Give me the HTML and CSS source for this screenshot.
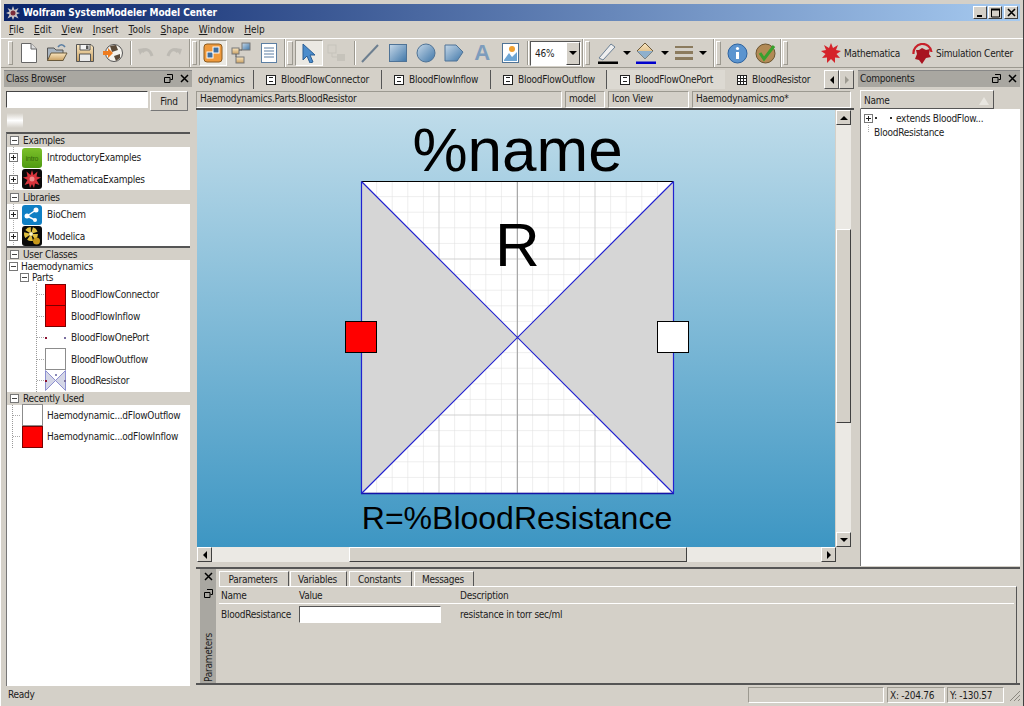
FILE: index.html
```html
<!DOCTYPE html>
<html lang="en">

<head>
  <meta charset="UTF-8">
  <title>Wolfram SystemModeler Model Center</title>
  <link rel="stylesheet" href="styles.css">
</head>

<body>
  <svg class="defs" width="0" height="0">
    <defs>
      <linearGradient id="blueShape" x1="0" y1="0" x2="1" y2="1">
        <stop offset="0" stop-color="#c6d8e8" />
        <stop offset="1" stop-color="#3f76a8" />
      </linearGradient>
      <linearGradient id="tan" x1="0" y1="0" x2="0" y2="1">
        <stop offset="0" stop-color="#fbe7c0" />
        <stop offset="1" stop-color="#c9a062" />
      </linearGradient>
      <linearGradient id="canvasBg" x1="0" y1="0" x2="0" y2="1">
        <stop offset="0" stop-color="#bfdcea" />
        <stop offset="1" stop-color="#3d96c3" />
      </linearGradient>
      <linearGradient id="introGreen" x1="0" y1="0" x2="0" y2="1">
        <stop offset="0" stop-color="#7cc02a" />
        <stop offset="1" stop-color="#4f9a12" />
      </linearGradient>
      <pattern id="gridMinor" x="361.5" y="181.5" width="15.6" height="15.6" patternUnits="userSpaceOnUse">
        <path d="M15.6 0V15.6H0" fill="none" stroke="#dedede" />
      </pattern>
      <pattern id="gridMajor" x="361.5" y="181.5" width="78" height="78" patternUnits="userSpaceOnUse">
        <path d="M78 0V78H0" fill="none" stroke="#bcbcbc" />
      </pattern>
    </defs>
  </svg>

  <div class="window">
    <div class="titlebar">
      <svg class="title-icon" width="14" height="14" viewBox="0 0 14 14">
        <polygon points="7,0 8.5,4 12.5,2 10.5,6 14,7 10.5,8.5 12.5,12.5 8.5,10.5 7,14 5.5,10.5 1.5,12.5 3.5,8.5 0,7 3.5,5.5 1.5,2 5.5,4" fill="#c9c3c3" />
        <circle cx="7" cy="7" r="2.5" fill="#7c2d3a" />
      </svg>
      <span class="title-text">Wolfram SystemModeler Model Center</span>
      <div class="win-buttons">
        <span class="win-btn"><svg width="9" height="9" viewBox="0 0 9 9"><path d="M1 8H6" stroke="#000" stroke-width="2" /></svg></span>
        <span class="win-btn"><svg width="11" height="10" viewBox="0 0 11 10"><path d="M1.5 1.5H9.5V9H1.5Z" fill="none" stroke="#000" /><path d="M1 1.5H10" stroke="#000" stroke-width="2" /></svg></span>
        <span class="win-btn close-btn"><svg width="9" height="9" viewBox="0 0 9 9"><path d="M1 1L8 8M8 1L1 8" stroke="#000" stroke-width="1.6" /></svg></span>
      </div>
    </div>

    <div class="menubar">
      <span><u>F</u>ile</span>
      <span><u>E</u>dit</span>
      <span><u>V</u>iew</span>
      <span><u>I</u>nsert</span>
      <span><u>T</u>ools</span>
      <span><u>S</u>hape</span>
      <span><u>W</u>indow</span>
      <span><u>H</u>elp</span>
    </div>

    <div class="toolbar">
      <div class="grip"></div>
      <div class="tool-group">
        <span class="tool"><svg width="20" height="22" viewBox="0 0 20 22"><path d="M2.5 1.5H12L17.5 7V20.5H2.5Z" fill="#fff" stroke="#666" /><path d="M12 1.5V7H17.5" fill="#ddd" stroke="#666" /></svg></span>
        <span class="tool"><svg width="22" height="20" viewBox="0 0 22 20"><path d="M1.5 5H8L10 7H17V17.5H1.5Z" fill="#a8b4c0" stroke="#555" /><path d="M1.5 17.5L5 10H21L17 17.5Z" fill="url(#tan)" stroke="#6a5a3c" /><path d="M12 4C14 1 17 1 19 4" fill="none" stroke="#5a7ea3" stroke-width="1.6" /></svg></span>
        <span class="tool"><svg width="20" height="20" viewBox="0 0 20 20"><path d="M1.5 1.5H16L18.5 4V18.5H1.5Z" fill="url(#tan)" stroke="#555" /><path d="M5 1.5H15V7H5Z" fill="#f4f4f4" stroke="#555" /><path d="M11 2.5H13.5V6H11Z" fill="#555" /><path d="M4.5 11H15.5V18.5H4.5Z" fill="#e8e8e8" stroke="#555" /></svg></span>
        <span class="tool"><svg width="22" height="20" viewBox="0 0 22 20"><circle cx="12" cy="10" r="8.5" fill="#f4f2ec" stroke="#555" /><path d="M8 3L14 2L16 7L10 9ZM12 13L18 11L18 15L14 18Z" fill="#5b4a38" /><path d="M1 8H6V5L11 10L6 15V12H1Z" fill="#ef7c1f" /></svg></span>
        <span class="divider"></span>
        <span class="tool"><svg width="18" height="14" viewBox="0 0 18 14"><path d="M5 6C8 2 13 3 15 10" fill="none" stroke="#bdbab3" stroke-width="3" /><path d="M1 3L8 2L3 9Z" fill="#bdbab3" /></svg></span>
        <span class="tool"><svg width="18" height="14" viewBox="0 0 18 14"><path d="M13 6C10 2 5 3 3 10" fill="none" stroke="#bdbab3" stroke-width="3" /><path d="M17 3L10 2L15 9Z" fill="#bdbab3" /></svg></span>
      </div>
      <div class="toolbar-break"></div>
      <div class="grip"></div>
      <div class="tool-group">
        <span class="tool tool-on"><svg width="20" height="20" viewBox="0 0 20 20"><rect x="1" y="1" width="18" height="18" rx="3" fill="#ef9a3c" stroke="#8a5a20" /><rect x="4" y="9" width="6" height="6" fill="#3f6e9e" stroke="#fff" /><rect x="10" y="4" width="6" height="6" fill="#3f6e9e" stroke="#fff" /></svg></span>
        <span class="tool"><svg width="20" height="22" viewBox="0 0 20 22"><rect x="1" y="6" width="7" height="6" fill="url(#tan)" stroke="#777" /><rect x="11" y="1" width="8" height="7" fill="url(#blueShape)" stroke="#777" /><rect x="5" y="15" width="8" height="6" fill="url(#tan)" stroke="#777" /><path d="M8 8H11M5 12V15" stroke="#555" /></svg></span>
        <span class="tool"><svg width="18" height="22" viewBox="0 0 18 22"><rect x="1.5" y="1.5" width="15" height="19" fill="#fff" stroke="#5c7fa3" /><path d="M4 6H14M4 9H14M4 12H14M4 15H14" stroke="#5c7fa3" /></svg></span>
      </div>
      <div class="toolbar-break"></div>
      <div class="grip wide-grip"></div>
      <div class="tool-group">
        <span class="tool tool-on"><svg width="16" height="20" viewBox="0 0 16 20"><path d="M2 1L14 12H9L12 19L9 20L6 13L2 17Z" fill="#4a8ccc" stroke="#2b5f94" /></svg></span>
        <span class="tool"><svg width="20" height="20" viewBox="0 0 20 20"><rect x="1" y="2" width="8" height="8" fill="none" stroke="#c6c3bb" /><rect x="10" y="11" width="8" height="7" fill="#c6c3bb" /><path d="M5 10V14H10" fill="none" stroke="#c6c3bb" /></svg></span>
        <span class="divider"></span>
        <span class="tool"><svg width="20" height="20" viewBox="0 0 20 20"><path d="M2 19L18 2" stroke="#6d7f90" stroke-width="2" /></svg></span>
        <span class="tool"><svg width="18" height="18" viewBox="0 0 18 18"><rect x=".5" y=".5" width="17" height="17" fill="url(#blueShape)" stroke="#4f7396" /></svg></span>
        <span class="tool"><svg width="20" height="20" viewBox="0 0 20 20"><circle cx="10" cy="10" r="9" fill="url(#blueShape)" stroke="#4f7396" /></svg></span>
        <span class="tool"><svg width="20" height="18" viewBox="0 0 20 18"><path d="M1 1H12L19 8L13 17H1Z" fill="url(#blueShape)" stroke="#4f7396" /></svg></span>
        <span class="tool tool-letter">A</span>
        <span class="tool"><svg width="17" height="20" viewBox="0 0 17 20"><rect x=".5" y=".5" width="16" height="19" fill="#fff" stroke="#4f7396" /><path d="M2 17L7 10L10 14L15 9V18H2Z" fill="#6da5d4" /><circle cx="10" cy="6" r="3" fill="#f0a030" /></svg></span>
      </div>
      <div class="divider"></div>
      <div class="zoom-combo">
        <span class="zoom-value">46%</span>
        <span class="combo-btn"><span class="arrow-down"></span></span>
      </div>
      <div class="toolbar-break"></div>
      <div class="grip"></div>
      <div class="tool-group color-tools">
        <span class="color-tool"><svg width="22" height="22" viewBox="0 0 22 22"><path d="M2 16L14 2L18 5L6 18Z" fill="#eee" stroke="#6a7f94" /><path d="M1 21H21" stroke="#000" stroke-width="3" /></svg></span>
        <span class="arrow-down"></span>
        <span class="color-tool"><svg width="22" height="22" viewBox="0 0 22 22"><path d="M10 1L18 9L10 17L2 9Z" fill="url(#tan)" stroke="#6d5a3a" /><path d="M2 9H18L10 17Z" fill="#8fb0cc" /><path d="M1 21H21" stroke="#0000cc" stroke-width="3" /></svg></span>
        <span class="arrow-down"></span>
        <span class="color-tool"><svg width="20" height="16" viewBox="0 0 20 16"><path d="M1 2H19" stroke="#8b7b5e" stroke-width="2" /><path d="M1 7.5H19" stroke="#8b7b5e" stroke-width="3" /><path d="M1 13.500H19" stroke="#8b7b5e" stroke-width="3" /></svg></span>
        <span class="arrow-down"></span>
      </div>
      <div class="toolbar-break"></div>
      <div class="grip"></div>
      <div class="tool-group">
        <span class="tool"><svg width="21" height="21" viewBox="0 0 21 21"><circle cx="10.500" cy="10.500" r="9.500" fill="#5b94cf" stroke="#2b62a0" /><circle cx="10.500" cy="5.500" r="1.600" fill="#fff" /><path d="M10.500 9V16" stroke="#fff" stroke-width="3" /></svg></span>
        <span class="tool"><svg width="21" height="21" viewBox="0 0 21 21"><circle cx="10.500" cy="10.500" r="9.500" fill="#b28a55" stroke="#6c5530" /><path d="M5 10L9 16L19 3" fill="none" stroke="#38a02e" stroke-width="3" /></svg></span>
      </div>
      <div class="toolbar-break"></div>
      <div class="grip"></div>
      <div class="launchers">
        <span class="launcher"><svg width="20" height="20" viewBox="0 0 20 20"><polygon points="10,0 12,5 17,2 15,7 20,8 15.500,11 19,15 14,14.500 14,20 10,16 6,20 6,14.500 1,15 4.500,11 0,8 5,7 3,2 8,5" fill="#d5232a" /></svg>Mathematica</span>
        <span class="launcher"><svg width="21" height="21" viewBox="0 0 21 21"><path d="M1.500 11A9 9 0 0 1 19.500 9" fill="none" stroke="#c8202a" stroke-width="2.200" /><polygon points="10,5 14,7 18,6 17,11 19,14 14,15 10,21 7,17 3,16 5,11 4,7 7,7" fill="#a81420" /></svg>Simulation Center</span>
      </div>
    </div>

    <div class="main">
      <aside class="class-browser">
        <div class="dock-title">
          <span>Class Browser</span>
          <span class="dock-icons">
            <svg width="9" height="9" viewBox="0 0 9 9"><path d="M3 .5H8.500V5.500H6.500M.5 3.500H6V8.500H.5Z" fill="none" stroke="#000" /></svg>
            <svg width="9" height="9" viewBox="0 0 9 9"><path d="M1 1L8 8M8 1L1 8" stroke="#000" stroke-width="1.500" /></svg>
          </span>
        </div>
        <div class="search-row">
          <input class="search-input" type="text">
          <button class="find-btn">Find</button>
        </div>
        <div class="mini-row"><span class="mini-btn"></span></div>

        <div class="tree">
          <div class="tree-head"><span class="box minus"></span>Examples</div>
          <div class="lib-row">
            <span class="box plus"></span>
            <svg class="lib-icon" width="20" height="20" viewBox="0 0 20 20"><rect width="20" height="20" rx="3" fill="url(#introGreen)" /><text x="10" y="13" font-size="7" text-anchor="middle" fill="#35680a" font-family="Liberation Sans">intro</text></svg>
            IntroductoryExamples
          </div>
          <div class="lib-row">
            <span class="box plus"></span>
            <svg class="lib-icon" width="20" height="20" viewBox="0 0 20 20"><rect width="20" height="20" rx="3" fill="#0a0a0a" /><polygon points="10,1 11.500,6 15.500,2.500 14.500,7.500 19,8.500 14.500,11 17.500,16 13,14.500 12,19 10,15 8,19 7,14.500 2.500,16 5.500,11 1,8.500 5.500,7.500 4.500,2.500 8.500,6" fill="#d8343c" /><circle cx="10" cy="10" r="2.500" fill="#f08a8a" /></svg>
            MathematicaExamples
          </div>
          <div class="tree-head libs-head"><span class="box minus"></span>Libraries</div>
          <div class="lib-row">
            <span class="box plus"></span>
            <svg class="lib-icon" width="20" height="20" viewBox="0 0 20 20"><rect width="20" height="20" rx="3" fill="#0f7fc4" /><path d="M5 11L14 5M5 11L13 15" stroke="#fff" stroke-width="1.500" /><circle cx="5" cy="11" r="2.500" fill="#fff" /><circle cx="14" cy="5" r="2.500" fill="#fff" /><circle cx="13" cy="15" r="2" fill="#fff" /></svg>
            BioChem
          </div>
          <div class="lib-row">
            <span class="box plus"></span>
            <svg class="lib-icon" width="20" height="20" viewBox="0 0 20 20"><rect width="20" height="20" rx="3" fill="#0a0a0a" /><circle cx="9" cy="8" r="4.500" fill="none" stroke="#e0c040" stroke-width="5" stroke-dasharray="4 1.500" /><circle cx="9" cy="8" r="2" fill="#fff6c0" /><circle cx="14.500" cy="15" r="3.500" fill="#c7981a" /></svg>
            Modelica
          </div>
          <div class="tree-rule"></div>
          <div class="tree-head user-head"><span class="box minus"></span>User Classes</div>
          <div class="plain-row"><span class="box minus"></span>Haemodynamics</div>
          <div class="plain-row parts-row"><span class="box minus"></span>Parts</div>
          <div class="branch">
            <div class="class-row">
              <span class="class-icon red-icon"></span>BloodFlowConnector
            </div>
            <div class="class-row">
              <span class="class-icon red-icon"></span>BloodFlowInflow
            </div>
            <div class="class-row">
              <svg class="class-icon-svg" width="21" height="21" viewBox="0 0 21 21"><rect x="0" y="10" width="2" height="2" fill="#8a1030" /><rect x="19" y="10" width="2" height="2" fill="#7a6fa0" /></svg>BloodFlowOnePort
            </div>
            <div class="class-row">
              <span class="class-icon white-icon"></span>BloodFlowOutflow
            </div>
            <div class="class-row">
              <svg class="class-icon-svg" width="21" height="21" viewBox="0 0 21 21"><path d="M.5 .5L20.500 20.500V.5L.5 20.500Z" fill="#d4d6e6" stroke="#8d8fd0" /><rect x="0" y="10" width="2" height="2" fill="#8a1030" /><rect x="19" y="10" width="2" height="2" fill="#7a6fa0" /><rect x="10" y="4" width="2" height="2" fill="#8a8ab8" /></svg>BloodResistor
            </div>
          </div>
          <div class="tree-head"><span class="box minus"></span>Recently Used</div>
          <div class="recent">
            <div class="recent-row"><span class="class-icon white-icon"></span>Haemodynamic...dFlowOutflow</div>
            <div class="recent-row"><span class="class-icon red-icon"></span>Haemodynamic...odFlowInflow</div>
          </div>
        </div>
      </aside>

      <div class="workspace">
        <div class="top-row">
          <section class="editor">
            <div class="tabs">
              <span class="doc-tab cut-tab">odynamics</span>
              <span class="doc-tab tab-connector"><span class="tab-glyph"></span>BloodFlowConnector</span>
              <span class="doc-tab tab-inflow"><span class="tab-glyph"></span>BloodFlowInflow</span>
              <span class="doc-tab tab-outflow"><span class="tab-glyph"></span>BloodFlowOutflow</span>
              <span class="doc-tab tab-oneport"><span class="tab-glyph"></span>BloodFlowOnePort</span>
              <span class="doc-tab tab-active"><span class="tab-glyph grid-glyph"></span>BloodResistor</span>
              <span class="tab-scroll">
                <span class="tab-arrow"><span class="arrow-left"></span></span>
                <span class="tab-arrow"><span class="arrow-right-off"></span></span>
              </span>
            </div>
            <div class="infobar">
              <span class="field field-path">Haemodynamics.Parts.BloodResistor</span>
              <span class="field field-kind">model</span>
              <span class="field field-view">Icon View</span>
              <span class="field field-file">Haemodynamics.mo*</span>
            </div>
            <div class="canvas-area">
              <svg class="canvas" width="638" height="437" viewBox="197 110 638 437">
                <rect x="197" y="110" width="638" height="437" fill="url(#canvasBg)" />
                <rect x="361.500" y="181.500" width="312" height="312" fill="#fff" />
                <rect x="361.500" y="181.500" width="312" height="312" fill="url(#gridMinor)" />
                <rect x="361.500" y="181.500" width="312" height="312" fill="url(#gridMajor)" />
                <path d="M517.500 181.500V493.500M361.500 337.500H673.500" stroke="#a8a8a8" />
                <path d="M361.500 181.500L517.500 337.500L361.500 493.500Z M673.500 181.500L517.500 337.500L673.500 493.500Z" fill="#d6d6d6" />
                <path d="M361.500 181.500H673.500" stroke="#000" />
                <path d="M361 493.500H674" stroke="#1414a8" stroke-width="1.600" />
                <path d="M361.500 181.500L673.500 493.500M673.500 181.500L361.500 493.500M361.500 181.500V493.500M673.500 181.500V493.500" class="canvas-blue" />
                <text x="517.500" y="171" class="canvas-name">%name</text>
                <text x="517.500" y="266" class="canvas-r">R</text>
                <text x="517" y="529" class="canvas-expr">R=%BloodResistance</text>
                <rect x="345.500" y="321.500" width="31" height="31" fill="#ff0000" stroke="#000" />
                <rect x="657.500" y="321.500" width="31" height="31" fill="#fff" stroke="#000" />
              </svg>
              <div class="vscroll">
                <span class="sb-btn"><span class="arrow-up"></span></span>
                <span class="sb-track v-track-a"></span>
                <span class="sb-thumb v-thumb"></span>
                <span class="sb-track v-track-b"></span>
                <span class="sb-btn"><span class="arrow-down"></span></span>
              </div>
              <div class="hscroll">
                <span class="sb-btn"><span class="arrow-left"></span></span>
                <span class="sb-track h-track-a"></span>
                <span class="sb-thumb h-thumb"></span>
                <span class="sb-track h-track-b"></span>
                <span class="sb-btn"><span class="arrow-right"></span></span>
              </div>
            </div>
          </section>

          <aside class="components">
            <div class="dock-title">
              <span>Components</span>
              <span class="dock-icons">
                <svg width="9" height="9" viewBox="0 0 9 9"><path d="M3 .5H8.500V5.500H6.500M.5 3.500H6V8.500H.5Z" fill="none" stroke="#000" /></svg>
                <svg width="9" height="9" viewBox="0 0 9 9"><path d="M1 1L8 8M8 1L1 8" stroke="#000" stroke-width="1.500" /></svg>
              </span>
            </div>
            <div class="comp-head">
              <span class="comp-name">Name<span class="sort-mark"></span></span>
            </div>
            <div class="comp-list">
              <div class="comp-row"><span class="box plus"></span><span class="dots"></span>extends BloodFlow...</div>
              <div class="comp-row comp-leaf">BloodResistance</div>
            </div>
          </aside>
        </div>

        <section class="params">
          <div class="param-strip">
            <svg width="9" height="9" viewBox="0 0 9 9"><path d="M1 1L8 8M8 1L1 8" stroke="#000" stroke-width="1.500" /></svg>
            <svg width="9" height="9" viewBox="0 0 9 9"><path d="M3 .5H8.500V5.500H6.500M.5 3.500H6V8.500H.5Z" fill="none" stroke="#000" /></svg>
            <span class="strip-label">Parameters</span>
          </div>
          <div class="param-main">
            <div class="param-tabs">
              <span class="param-tab param-tab-on">Parameters</span>
              <span class="param-tab tab-vars">Variables</span>
              <span class="param-tab tab-const">Constants</span>
              <span class="param-tab tab-msgs">Messages</span>
            </div>
            <div class="param-body">
              <div class="param-grid param-head">
                <span>Name</span><span>Value</span><span>Description</span>
              </div>
              <div class="param-grid param-row">
                <span>BloodResistance</span>
                <input class="param-input" type="text">
                <span>resistance in torr sec/ml</span>
              </div>
            </div>
          </div>
        </section>
      </div>
    </div>

    <div class="statusbar">
      <span class="status-ready">Ready</span>
      <span class="status-cell status-blank"></span>
      <span class="status-cell status-x">X: -204.76</span>
      <span class="status-cell status-y">Y: -130.57</span>
      <svg class="status-grip" width="14" height="14" viewBox="0 0 14 14"><path d="M13 3L3 13M13 7L7 13M13 11L11 13" stroke="#8a877f" /></svg>
    </div>
  </div>
</body>

</html>
```

FILE: styles.css
```css
* {
  box-sizing: border-box;
  margin: 0;
  padding: 0;
}

body {
  font-family: 'DejaVu Sans Condensed', 'Liberation Sans', Arial, sans-serif;
  font-size: 10px;
  letter-spacing: -0.25px;
  color: #1c1c1c;
  background: #d4d0c8;
  overflow: hidden;
  white-space: nowrap;
}

.defs {
  display: block;
  height: 0;
}

.window {
  width: 1024px;
  height: 706px;
  padding-top: 4px;
  display: flex;
  flex-direction: column;
  background: #d4d0c8;
  border-right: 1px solid #404040;
  border-left: 1px solid #fff;
}

/* title bar */
.titlebar {
  height: 17px;
  margin: 0 3px;
  padding: 0 2px;
  display: flex;
  align-items: center;
  gap: 3px;
  background: linear-gradient(to right, #0a246a, #a6caf0);
}

.title-text {
  color: #fff;
  font-weight: bold;
  font-size: 10px;
  letter-spacing: -0.05px;
}

.win-buttons {
  margin-left: auto;
  display: flex;
  gap: 1px;
}

.win-btn {
  width: 14px;
  height: 13px;
  display: flex;
  align-items: center;
  justify-content: center;
  background: #d4d0c8;
  border: 1px solid;
  border-color: #fff #404040 #404040 #fff;
}

.close-btn {
  margin-left: 1px;
}

/* menu */
.menubar {
  height: 17px;
  padding-left: 8px;
  display: flex;
  align-items: center;
  gap: 10px;
  letter-spacing: 0;
}

/* toolbar */
.toolbar {
  height: 30px;
  display: flex;
  align-items: center;
  padding-left: 7px;
  border-top: 1px solid #fff;
  border-bottom: 1px solid #9c9990;
}

.grip {
  width: 5px;
  height: 24px;
  margin-right: 2px;
  flex: none;
  border: 1px solid;
  border-color: #fff #9c9990 #9c9990 #fff;
}

.wide-grip {
  width: 6px;
}

.toolbar-break {
  width: 2px;
  height: 28px;
  margin: 0 1px;
  flex: none;
  border-left: 1px solid #9c9990;
  border-right: 1px solid #fff;
}

.tool-group {
  display: flex;
  align-items: center;
}

.tool {
  width: 28px;
  height: 26px;
  flex: none;
  display: flex;
  align-items: center;
  justify-content: center;
}

.tool-on {
  background: #ebe9e3;
  border: 1px solid;
  border-color: #9c9990 #fff #fff #9c9990;
}

.tool-letter {
  font-family: 'Liberation Sans', Arial, sans-serif;
  font-size: 22px;
  font-weight: bold;
  color: #7d9cbc;
}

.divider {
  width: 2px;
  height: 24px;
  margin: 0 0 0 3px;
  flex: none;
  border-left: 1px solid #9c9990;
  border-right: 1px solid #fff;
}

.zoom-combo {
  width: 51px;
  height: 25px;
  margin-left: 1px;
  display: flex;
  align-items: stretch;
  background: #fff;
  border: 1px solid;
  border-color: #555 #fff #fff #555;
}

.zoom-value {
  flex: 1;
  padding-left: 4px;
  line-height: 23px;
}

.combo-btn {
  width: 14px;
  display: flex;
  align-items: center;
  justify-content: center;
  background: #d4d0c8;
  border: 1px solid;
  border-color: #fff #404040 #404040 #fff;
}

.color-tools {
  gap: 3px;
  margin: 0 5px 0 4px;
}

.color-tool {
  width: 24px;
  display: flex;
  justify-content: center;
}

.launchers {
  margin-left: 31px;
  display: flex;
  gap: 12px;
}

.launcher {
  display: flex;
  align-items: center;
  gap: 3px;
}

/* little triangles used by combo boxes and scrollbars */
.arrow-down,
.arrow-up,
.arrow-left,
.arrow-right,
.arrow-right-off {
  width: 0;
  height: 0;
  display: block;
  flex: none;
  border-style: solid;
  border-color: transparent;
}

.arrow-down {
  border-width: 4px 4px 0;
  border-top-color: #000;
}

.arrow-up {
  border-width: 0 4px 4px;
  border-bottom-color: #000;
}

.arrow-left {
  border-width: 4px 4px 4px 0;
  border-right-color: #000;
}

.arrow-right {
  border-width: 4px 0 4px 4px;
  border-left-color: #000;
}

.arrow-right-off {
  border-width: 4px 0 4px 4px;
  border-left-color: #9c9990;
}

/* main area */
.main {
  flex: 1;
  min-height: 0;
  padding: 1px 3px 0;
  display: grid;
  grid-template-columns: 188px 1fr;
  gap: 4px;
}

.dock-title {
  height: 17px;
  margin-top: 1px;
  padding: 0 3px 2px 2px;
  display: flex;
  align-items: center;
  justify-content: space-between;
  background: #a9a7a1;
  border-top: 1px solid #888;
}

.dock-icons {
  display: flex;
  gap: 7px;
}

/* class browser */
.class-browser {
  display: flex;
  flex-direction: column;
  min-height: 0;
}

.search-row {
  height: 20px;
  margin-top: 4px;
  padding-left: 2px;
  display: flex;
  gap: 2px;
}

.search-input {
  width: 142px;
  height: 17px;
  background: #fff;
  border: 1px solid;
  border-color: #444 #fff #fff #444;
}

.find-btn {
  width: 38px;
  height: 20px;
  font: inherit;
  letter-spacing: inherit;
  color: inherit;
  background: #d4d0c8;
  border: 1px solid;
  border-color: #fff #777 #777 #fff;
}

.mini-row {
  height: 21px;
  padding: 2px 0 0 3px;
}

.mini-btn {
  display: block;
  width: 16px;
  height: 15px;
  background: linear-gradient(#d4d0c8, #fff 50%, #d4d0c8);
}

.tree {
  flex: 1;
  margin: 0 2px;
  background: #fff;
  border-top: 2px solid #555;
  border-left: 1px solid #777;
}

.tree-head {
  height: 13px;
  padding-left: 3px;
  display: flex;
  align-items: center;
  gap: 4px;
  background: #d4d0c8;
}

.libs-head {
  height: 14px;
}

.user-head {
  height: 12px;
}

.box {
  width: 9px;
  height: 9px;
  flex: none;
  background: linear-gradient(#444, #444) center / 5px 1px no-repeat #fff;
  border: 1px solid #777;
}

.plus {
  background:
    linear-gradient(#222, #222) center / 5px 1px no-repeat,
    linear-gradient(#222, #222) center / 1px 5px no-repeat,
    #fff;
}

.lib-row {
  height: 21.500px;
  padding-left: 2px;
  display: flex;
  align-items: center;
  background: repeating-linear-gradient(#aaa 0 1px, transparent 1px 2px) 6px 0 / 1px 100% no-repeat;
}

.lib-icon {
  margin: 0 5px 0 4px;
}

.tree-rule {
  height: 2px;
  margin-top: -1px;
  position: relative;
  background: #555;
}

.plain-row {
  height: 12px;
  padding-left: 2px;
  display: flex;
  align-items: center;
  gap: 3px;
}

.parts-row {
  height: 11px;
  padding-left: 13px;
}

.branch {
  margin-left: 29px;
  padding-top: 1px;
  border-left: 1px dotted #999;
}

.class-row {
  height: 21.500px;
  display: flex;
  align-items: center;
  gap: 5px;
  padding-left: 8px;
  background: repeating-linear-gradient(to right, #aaa 0 1px, transparent 1px 2px) 0 center / 8px 1px no-repeat;
}

.class-icon {
  width: 21px;
  height: 22px;
  flex: none;
  border: 1px solid #8c8c8c;
}

.class-icon-svg {
  flex: none;
}

.red-icon {
  background: #ff0000;
  border-color: #7a0000;
}

.white-icon {
  background: #fff;
}

.recent {
  margin-left: 5px;
  border-left: 1px dotted #999;
}

.recent-row {
  height: 21.500px;
  padding-left: 9px;
  display: flex;
  align-items: center;
  gap: 4px;
  background: repeating-linear-gradient(to right, #aaa 0 1px, transparent 1px 2px) 0 center / 8px 1px no-repeat;
}

/* editor */
.workspace {
  min-width: 0;
  display: flex;
  flex-direction: column;
}

.top-row {
  height: 497px;
  display: flex;
  gap: 4px;
}

.editor {
  width: 658px;
  display: flex;
  flex-direction: column;
}

.tabs {
  height: 19px;
  margin-top: 1px;
  display: flex;
  align-items: stretch;
}

.doc-tab {
  display: flex;
  align-items: center;
  padding-left: 12px;
  gap: 5px;
  border-right: 1px solid #555;
}

.cut-tab {
  width: 58px;
  padding-left: 2px;
}

.tab-connector {
  width: 128px;
}

.tab-inflow {
  width: 109px;
}

.tab-outflow {
  width: 116px;
}

.tab-oneport {
  width: 118px;
  padding-left: 13px;
  border-right: 0;
  background: #dcd9d2;
}

.tab-active {
  width: 99px;
  border-right: 0;
}

.tab-glyph {
  width: 10px;
  height: 10px;
  flex: none;
  border: 1px solid #222;
  background:
    linear-gradient(#222, #222) center 1px / 4px 1px no-repeat,
    linear-gradient(#222, #222) center 5px / 4px 1px no-repeat,
    #fff;
}

.grid-glyph {
  background:
    repeating-linear-gradient(#222 0 1px, transparent 1px 3px) 0 2px / 100% 100% no-repeat,
    repeating-linear-gradient(to right, #222 0 1px, transparent 1px 3px) 2px 0 / 100% 100% no-repeat,
    #fff;
}

.tab-scroll {
  margin-left: auto;
  display: flex;
}

.tab-arrow {
  width: 15px;
  display: flex;
  align-items: center;
  justify-content: center;
  border: 1px solid;
  border-color: #fff #555 #555 #fff;
}

.infobar {
  height: 19px;
  margin-top: 2px;
  display: flex;
  gap: 3px;
  border-bottom: 2px solid #4a4a4a;
}

.field {
  padding-left: 3px;
  line-height: 14px;
  border: 1px solid;
  border-color: #9c9990 #fff #fff #9c9990;
}

.field-path {
  width: 366px;
}

.field-kind {
  width: 40px;
}

.field-view {
  width: 81px;
}

.field-file {
  width: 159px;
}

.canvas-area {
  display: grid;
  grid-template-columns: 639px 15px;
  grid-template-rows: 437px 15px;
  padding-left: 1px;
}

.canvas {
  display: block;
}

.canvas-blue {
  fill: none;
  stroke: #2222d0;
  stroke-width: 1.200;
}

.canvas-name,
.canvas-r,
.canvas-expr {
  font-family: 'Liberation Sans', Arial, sans-serif;
  letter-spacing: 0;
  text-anchor: middle;
  fill: #000;
}

.canvas-name {
  font-size: 62px;
}

.canvas-r {
  font-size: 62px;
}

.canvas-expr {
  font-size: 32px;
}

.vscroll {
  display: flex;
  flex-direction: column;
}

.hscroll {
  display: flex;
}

.sb-btn {
  width: 15px;
  height: 15px;
  flex: none;
  display: flex;
  align-items: center;
  justify-content: center;
  background: #d4d0c8;
  border: 1px solid;
  border-color: #fff #404040 #404040 #fff;
}

.sb-track {
  flex: none;
  background: #ebe9e4;
}

.sb-thumb {
  flex: none;
  background: #d4d0c8;
  border: 1px solid;
  border-color: #fff #404040 #404040 #fff;
}

.v-track-a {
  height: 104px;
}

.v-thumb {
  height: 194px;
}

.v-track-b {
  height: 109px;
}

.h-track-a {
  width: 137px;
}

.h-thumb {
  width: 338px;
}

.h-track-b {
  width: 134px;
}

/* components */
.components {
  flex: 1;
  min-width: 0;
  display: flex;
  flex-direction: column;
}

.comp-head {
  height: 19px;
  margin-top: 3px;
  padding-left: 2px;
  display: flex;
}

.comp-name {
  width: 134px;
  padding: 2px 0 0 3px;
  display: flex;
  align-items: center;
  justify-content: space-between;
  border: 1px solid;
  border-color: #fff #555 #555 #fff;
}

.sort-mark {
  width: 0;
  height: 0;
  margin-right: 4px;
  border-style: solid;
  border-width: 0 5px 8px;
  border-color: transparent transparent #e8e6e0;
}

.comp-list {
  flex: 1;
  margin-left: 2px;
  padding-top: 2px;
  background: #fff;
  border-left: 1px solid #777;
}

.comp-row {
  height: 14px;
  padding-left: 3px;
  display: flex;
  align-items: center;
}

.dots {
  width: 23px;
  height: 2px;
  flex: none;
  background:
    linear-gradient(#333, #333) 2px 0 / 2px 2px no-repeat,
    linear-gradient(#333, #333) 17px 0 / 2px 2px no-repeat;
}

.comp-leaf {
  padding-left: 13px;
  background: repeating-linear-gradient(#aaa 0 1px, transparent 1px 2px) 7px 0 / 1px 7px no-repeat;
}

/* parameters panel */
.params {
  height: 118px;
  margin-top: 1px;
  display: flex;
  border-top: 2px solid #555;
  border-bottom: 2px solid #555;
}

.param-strip {
  width: 16px;
  margin-left: 4px;
  padding: 3px 0 1px;
  display: flex;
  flex-direction: column;
  align-items: center;
  gap: 8px;
  background: #a9a7a1;
}

.strip-label {
  margin-top: auto;
  writing-mode: vertical-rl;
  transform: rotate(180deg);
}

.param-main {
  flex: 1;
  padding: 2px 0 0 3px;
  display: flex;
  flex-direction: column;
}

.param-tabs {
  height: 15px;
  display: flex;
  gap: 2px;
  align-items: flex-end;
}

.param-tab {
  height: 15px;
  padding-right: 2px;
  text-align: center;
  line-height: 16px;
  border-top: 1px solid #fff;
  border-left: 1px solid #fff;
  border-right: 1px solid #555;
}

.param-tab-on {
  width: 70px;
  margin-right: -1px;
}

.tab-vars {
  width: 57px;
}

.tab-const {
  width: 63px;
}

.tab-msgs {
  width: 60px;
}

.param-body {
  flex: 1;
  border-top: 1px solid #fff;
  border-right: 1px solid #555;
  margin-right: 3px;
}

.param-grid {
  display: grid;
  grid-template-columns: 78px 161px 1fr;
  padding-left: 2px;
  align-items: center;
}

.param-head {
  height: 17px;
  border-bottom: 1px solid #fff;
  margin-right: 2px;
}

.param-row {
  height: 20px;
}

.param-input {
  width: 142px;
  height: 17px;
  background: #fff;
  border: 1px solid;
  border-color: #555 #fff #fff #555;
}

/* status bar */
.statusbar {
  height: 20px;
  padding: 0 2px 3px 7px;
  display: flex;
  align-items: center;
}

.status-ready {
  width: 740px;
}

.status-cell {
  height: 16px;
  line-height: 15px;
  padding-left: 2px;
  border: 1px solid;
  border-color: #9c9990 #fff #fff #9c9990;
}

.status-blank {
  width: 136px;
}

.status-x {
  width: 58px;
  margin-left: 3px;
}

.status-y {
  width: 57px;
  margin-left: 2px;
}

.status-grip {
  margin-left: auto;
}
```
